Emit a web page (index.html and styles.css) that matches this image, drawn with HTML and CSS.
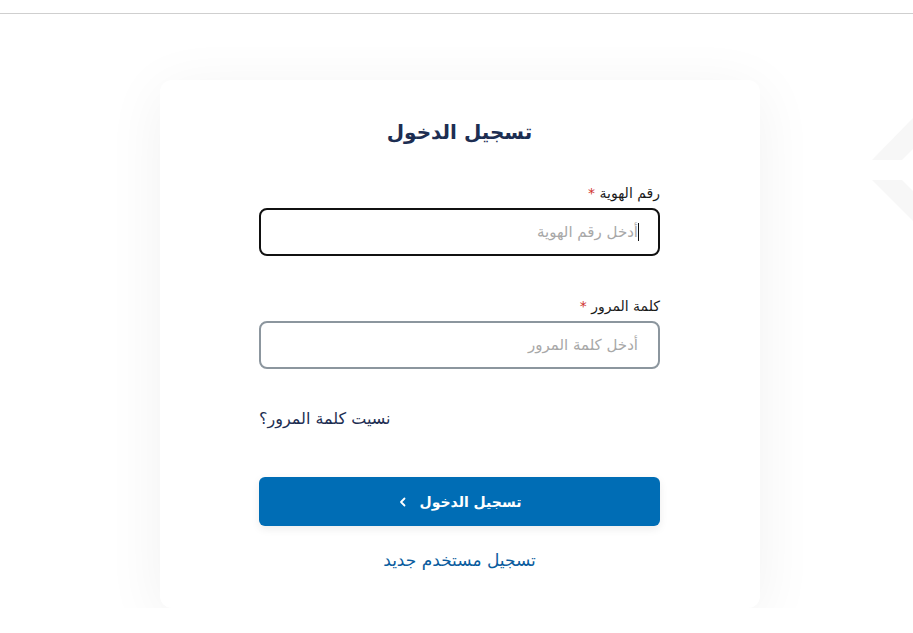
FILE: index.html
```html
<!DOCTYPE html>
<html lang="ar" dir="rtl">
<head>
  <meta charset="UTF-8" />
  <meta name="viewport" content="width=device-width, initial-scale=1.0"/>
  <title>تسجيل الدخول</title>
  <link rel="stylesheet" href="styles.css">
</head>
<body>
  <header class="topbar"></header>

  <svg class="deco" width="41" height="103" viewBox="0 0 41 103">
    <polygon points="41,0 0,42 30,42 41,31" fill="#f7f7f7"/>
    <polygon points="0,62 30,62 41,73 41,103" fill="#f7f7f7"/>
  </svg>

  <main class="page">
    <div class="card">
      <h1 class="title">تسجيل الدخول</h1>

      <form class="form">
        <label class="label">رقم الهوية <span class="req">*</span></label>
        <div class="input focused"><span class="placeholder">أدخل رقم الهوية</span><span class="caret"></span></div>

        <label class="label second">كلمة المرور <span class="req">*</span></label>
        <div class="input"><span class="placeholder">أدخل كلمة المرور</span></div>

        <a class="forgot" href="#">نسيت كلمة المرور؟</a>

        <button type="button" class="btn">تسجيل الدخول <span class="chev">
          <svg width="10" height="10" viewBox="0 0 10 10"><path d="M6.5 1.5 L3 5 L6.5 8.5" fill="none" stroke="#fff" stroke-width="1.8" stroke-linecap="round" stroke-linejoin="round"/></svg>
        </span></button>

        <a class="register" href="#">تسجيل مستخدم جديد</a>
      </form>
    </div>
  </main>
</body>
</html>
```

FILE: styles.css
```css
body { margin:0; background:#fff; font-family:"DejaVu Sans", "Noto Sans", sans-serif; color:#1c2b4a; overflow:hidden; }
.topbar { height:13px; border-bottom:1px solid #cfcfcf; background:#fff; }
.deco { position:absolute; left:872px; top:118px; }
.page { display:flex; justify-content:center; padding-top:66px; padding-left:7px; }
.card { width:600px; height:528px; box-sizing:border-box; background:#fff; border-radius:12px; box-shadow:0 10px 60px rgba(0,0,0,0.06); padding:36px 100px 0 99px; }
.title { margin:0 0 35px; text-align:center; font-size:20px; font-weight:bold; color:#1d2e52; line-height:32px; }
.form { display:flex; flex-direction:column; }
.label { font-size:14px; line-height:20px; color:#1a1a1a; margin-bottom:5px; }
.label.second { margin-top:40px; }
.req { color:#d0312d; }
.input { height:48px; box-sizing:border-box; border:2px solid #8c969e; border-radius:8px; display:flex; align-items:center; padding:0 20px; }
.input.focused { border-color:#111; }
.placeholder { font-size:15px; color:#a8a8a8; }
.caret { width:1px; height:18px; background:#111; margin-right:-1px; order:-1; }
.forgot { align-self:flex-end; margin-top:39px; font-size:16px; line-height:22px; color:#1d2e52; text-decoration:none; }
.btn { margin-top:47px; height:49px; border:none; border-radius:6px; background:#006db5; color:#fff; font-family:inherit; font-size:14px; font-weight:bold; display:flex; justify-content:center; align-items:center; gap:12px; box-shadow:0 3px 8px rgba(0,0,0,0.08); }
.chev { display:inline-flex; }
.register { align-self:center; margin-top:21px; font-size:17px; line-height:26px; color:#0a5c9e; text-decoration:none; }
```
